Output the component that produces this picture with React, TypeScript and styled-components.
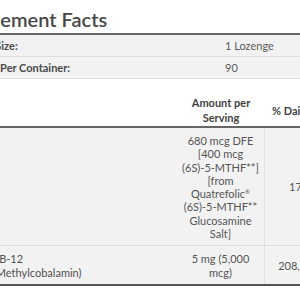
import React from "react";
import styled, { createGlobalStyle } from "styled-components";

const GlobalStyle = createGlobalStyle`
  html, body {
    margin: 0;
    padding: 0;
    background: #ffffff;
  }
  body {
    font-family: Lato, "Open Sans", "Liberation Sans", sans-serif;
    color: #555555;
    overflow: hidden;
  }
`;

type Nutrient = {
  name: string;
  note?: string;
  amount: React.ReactNode;
  dv: string;
};

const nutrients: Nutrient[] = [
  {
    name: "Folate",
    amount: (
      <>
        680 mcg DFE [400 mcg (6S)-5-MTHF**] [from Quatrefolic<sup>®</sup> (6S)-5-MTHF**
        Glucosamine Salt]
      </>
    ),
    dv: "170%",
  },
  {
    name: "Vitamin B-12",
    note: "(as Methylcobalamin)",
    amount: "5 mg (5,000 mcg)",
    dv: "208,333%",
  },
];

const App: React.FC = () => {
  return (
    <>
      <GlobalStyle />
      <Panel>
        <Title>Supplement Facts</Title>

        <ServingTable>
          <ServingRow>
            <Label>Serving Size:</Label>
            <Value>1 Lozenge</Value>
          </ServingRow>
          <ServingRow>
            <Label>Servings Per Container:</Label>
            <Value>90</Value>
          </ServingRow>
        </ServingTable>

        <FactsTable>
          <HeadRow>
            <HeadCell />
            <HeadCell $center>Amount per Serving</HeadCell>
            <HeadCell $nowrap>% Daily Value</HeadCell>
          </HeadRow>

          {nutrients.map((n, i) => (
            <NutrientRow key={n.name} $last={i === nutrients.length - 1}>
              <NameCell>
                {n.name}
                {n.note && <Note>{n.note}</Note>}
              </NameCell>
              <AmountCell>{n.amount}</AmountCell>
              <DvCell>{n.dv}</DvCell>
            </NutrientRow>
          ))}
        </FactsTable>
      </Panel>
    </>
  );
};

export default App;

const columns = "226px 88px 76px";

const Panel = styled.div`
  margin-left: -49px;
  width: 390px;
  padding-top: 7px;
`;

const Title = styled.h2`
  margin: 0;
  padding-bottom: 2px;
  font-size: 20px;
  line-height: 24px;
  font-weight: 600;
  color: #474747;
`;

const ServingTable = styled.div`
  border-top: 2px solid #666666;
`;

const ServingRow = styled.div`
  display: grid;
  grid-template-columns: 269px 1fr;
  background: #f2f2f2;
  border-bottom: 1px solid #dedede;
`;

const Label = styled.div`
  padding: 4px 5px;
  font-size: 11px;
  line-height: 13px;
  font-weight: 700;
  color: #4a4a4a;
`;

const Value = styled.div`
  padding: 4px 5px;
  font-size: 11px;
  line-height: 13px;
  color: #5a5a5a;
`;

const FactsTable = styled.div`
  margin-top: 11px;
`;

const HeadRow = styled.div`
  display: grid;
  grid-template-columns: ${columns};
  align-items: center;
  border-bottom: 2px solid #666666;
`;

const HeadCell = styled.div<{ $center?: boolean; $nowrap?: boolean }>`
  padding: 5px 5px 1px ${(p) => (p.$nowrap ? "7px" : "5px")};
  font-size: 11px;
  line-height: 15px;
  font-weight: 700;
  color: #3f3f3f;
  text-align: ${(p) => (p.$center ? "center" : "left")};
  white-space: ${(p) => (p.$nowrap ? "nowrap" : "normal")};
`;

const NutrientRow = styled.div<{ $last?: boolean }>`
  display: grid;
  grid-template-columns: ${columns};
  background: #f2f2f2;
  border-bottom: ${(p) => (p.$last ? "2px solid #555555" : "1px solid #dcdcdc")};
`;

const NameCell = styled.div`
  padding: 6px 5px 5px 8px;
  font-size: 11px;
  line-height: 13.3px;
  color: #505050;
`;

const Note = styled.div`
  padding-left: 21px;
`;

const AmountCell = styled.div`
  padding: 6px 5px 5px;
  font-size: 11px;
  line-height: 13.3px;
  text-align: center;
  color: #555555;
  border-right: 1px solid #e2e2e2;

  sup {
    font-size: 6px;
    line-height: 0;
    vertical-align: 4px;
  }
`;

const DvCell = styled.div`
  display: flex;
  align-items: center;
  justify-content: center;
  padding: 5px;
  font-size: 11px;
  line-height: 13.3px;
  color: #555555;
`;
